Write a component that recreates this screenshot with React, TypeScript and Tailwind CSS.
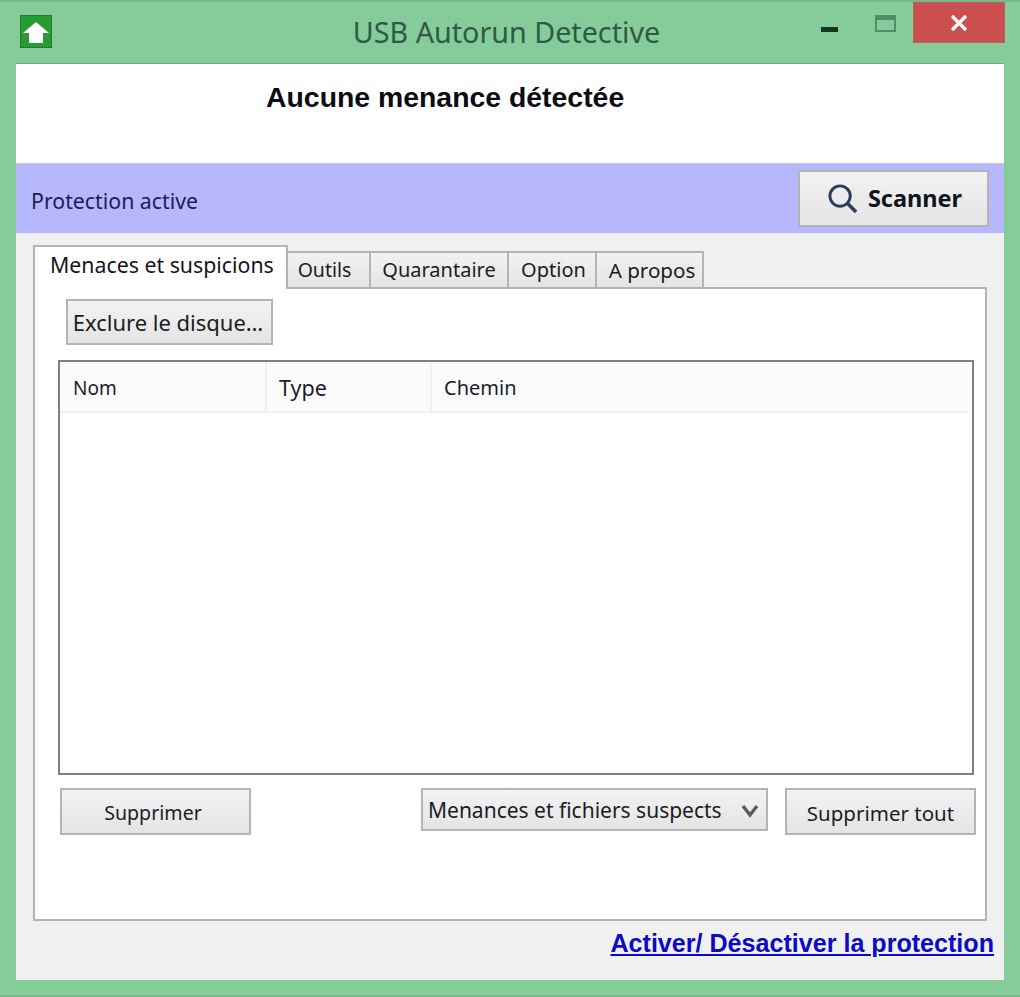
import React from "react";

const tabs = [
  { label: "Outils", width: "w-[83px] pr-[8px]", size: "text-[19.5px]" },
  { label: "Quarantaire", width: "w-[138px]", size: "text-[20px]" },
  { label: "Option", width: "w-[88px] pl-[3px]", size: "text-[20px]" },
  { label: "A propos", width: "w-[107px] pl-[5px]", size: "text-[20.6px]" },
];

const btn =
  "flex items-center whitespace-nowrap border-2 border-[#b4b4b4] bg-gradient-to-b from-[#f3f3f3] to-[#e4e4e4] text-[#1c1c24]";

export default function App() {
  return (
    <div className="w-[1020px] h-[997px] flex flex-col bg-[#85cc9a] border-t-2 border-b-2 border-[#78b98c] font-['Noto_Sans','Liberation_Sans',sans-serif] overflow-hidden">
      {/* title bar */}
      <div className="h-[61px] flex items-start shrink-0">
        <div className="mt-[13px] ml-[20px] w-[32px] h-[33px] bg-[#2a9a35] border border-[#1f7d2a] flex items-center justify-center">
          <svg width="28" height="26" viewBox="0 0 28 26">
            <path d="M14 3 L27 14 L21 14 L21 23 Q21 24 20 24 L8 24 Q7 24 7 23 L7 14 L1 14 Z" fill="#fff" />
          </svg>
        </div>
        <div className="flex-1 text-center text-[28.7px] leading-[40px] mt-[10px] pl-[140px] text-[#2f5a44] whitespace-nowrap">
          USB Autorun Detective
        </div>
        <div className="mr-[15px] flex items-start">
          <div className="mt-[25px] mr-[37px] w-[17px] h-[5px] bg-[#12391f]" />
          <div className="mt-[13px] mr-[17px] w-[21px] h-[17px] border-2 border-t-[5px] border-[#4d9066]" />
          <div className="w-[92px] h-[41px] bg-[#cc4f50] border border-[#b5625c] flex items-center justify-center">
            <svg width="18" height="18" viewBox="0 0 18 18">
              <path d="M2 2 L16 16 M16 2 L2 16" stroke="#fff" strokeWidth="3.2" />
            </svg>
          </div>
        </div>
      </div>

      {/* window content */}
      <div className="ml-[16px] mr-[16px] h-[917px] flex flex-col bg-[#f0f0f0] border-t border-[#6fa883]">
        <div className="h-[99px] shrink-0 bg-white pl-[250px] pt-[15px]">
          <div className="font-['Liberation_Sans',sans-serif] font-bold text-[28.4px] leading-[36px] text-[#0c0c14] whitespace-nowrap">
            Aucune menance détectée
          </div>
        </div>

        <div className="h-[70px] shrink-0 bg-[#b7b7fd] border-t border-[#c6c6f0] flex items-center justify-between pl-[15px] pr-[15px]">
          <span className="mt-[5px] text-[21.3px] text-[#1c1c5a]">Protection active</span>
          <div className={`${btn} justify-center w-[191px] h-[57px] gap-[10px] pl-[2px] border-[#a0a0b4]`}>
            <svg width="31" height="31" viewBox="0 0 32 32" fill="none" stroke="#2c3e5e">
              <circle cx="13.5" cy="13.5" r="10.5" strokeWidth="3" />
              <path d="M21 21 L30 30" strokeWidth="3.6" />
            </svg>
            <span className="font-bold text-[23.5px] text-[#10141c]">Scanner</span>
          </div>
        </div>

        {/* tabs */}
        <div className="pt-[14px] pl-[17px] pr-[17px] flex flex-col">
          <div className="flex items-end h-[42px] relative z-10 -mb-[2px]">
            <div className="w-[255px] h-[44px] bg-white border-2 border-b-0 border-[#b4b4b4] text-[21.3px] text-[#14141c] pl-[15px] leading-[36px] whitespace-nowrap">
              Menaces et suspicions
            </div>
            {tabs.map((t) => (
              <div
                key={t.label}
                className={`${t.width} ${t.size} h-[38px] bg-gradient-to-b from-[#f2f2f2] to-[#e4e4e4] border-2 border-l-0 border-[#b4b4b4] text-[#1c1c24] flex items-center justify-center whitespace-nowrap`}
              >
                {t.label}
              </div>
            ))}
          </div>

          <div className="h-[634px] bg-white border-2 border-[#b4b4b4] flex flex-col">
            <div className={`${btn} justify-center ml-[31px] mt-[10px] w-[207px] h-[46px] text-[22px] pr-[3px]`}>Exclure le disque…</div>

            {/* list */}
            <div className="ml-[23px] mt-[15px] w-[916px] h-[415px] border-2 border-[#808080] shrink-0">
              <div className="h-[51px] mr-[4px] bg-[#fbfbfb] border-b-2 border-[#eef2f6] flex text-[#1c1c2c]">
                <div className="w-[207px] pl-[13px] pt-[3px] border-r-2 border-[#edf1f5] flex items-center text-[19px]">Nom</div>
                <div className="w-[165px] pl-[12px] pt-[3px] border-r-2 border-[#edf1f5] flex items-center text-[21.5px]">Type</div>
                <div className="flex-1 pl-[12px] pt-[3px] flex items-center text-[20px]">Chemin</div>
              </div>
            </div>

            <div className="ml-[25px] mt-[13px] flex items-start">
              <div className={`${btn} justify-center w-[191px] h-[47px] pt-[3px] pr-[5px] text-[19.6px]`}>Supprimer</div>
              <div className={`${btn} justify-between ml-[170px] w-[347px] h-[43px] pt-[3px] pl-[5px] pr-[7px] text-[21px]`}>
                <span>Menances et fichiers suspects</span>
                <svg width="18" height="14" viewBox="0 0 18 14" fill="none" stroke="#5a5a66" strokeWidth="3.4">
                  <path d="M2 2 L9 11 L16 2" />
                </svg>
              </div>
              <div className={`${btn} justify-center ml-[17px] w-[191px] h-[47px] pt-[3px] text-[20.5px]`}>Supprimer tout</div>
            </div>
          </div>
        </div>

        <div className="flex justify-end pr-[10px] mt-[5px]">
          <a className="font-['Liberation_Sans',sans-serif] font-bold text-[25.1px] leading-[34px] text-[#0a0ac8] underline whitespace-nowrap">
            Activer/ Désactiver la protection
          </a>
        </div>
      </div>
    </div>
  );
}
